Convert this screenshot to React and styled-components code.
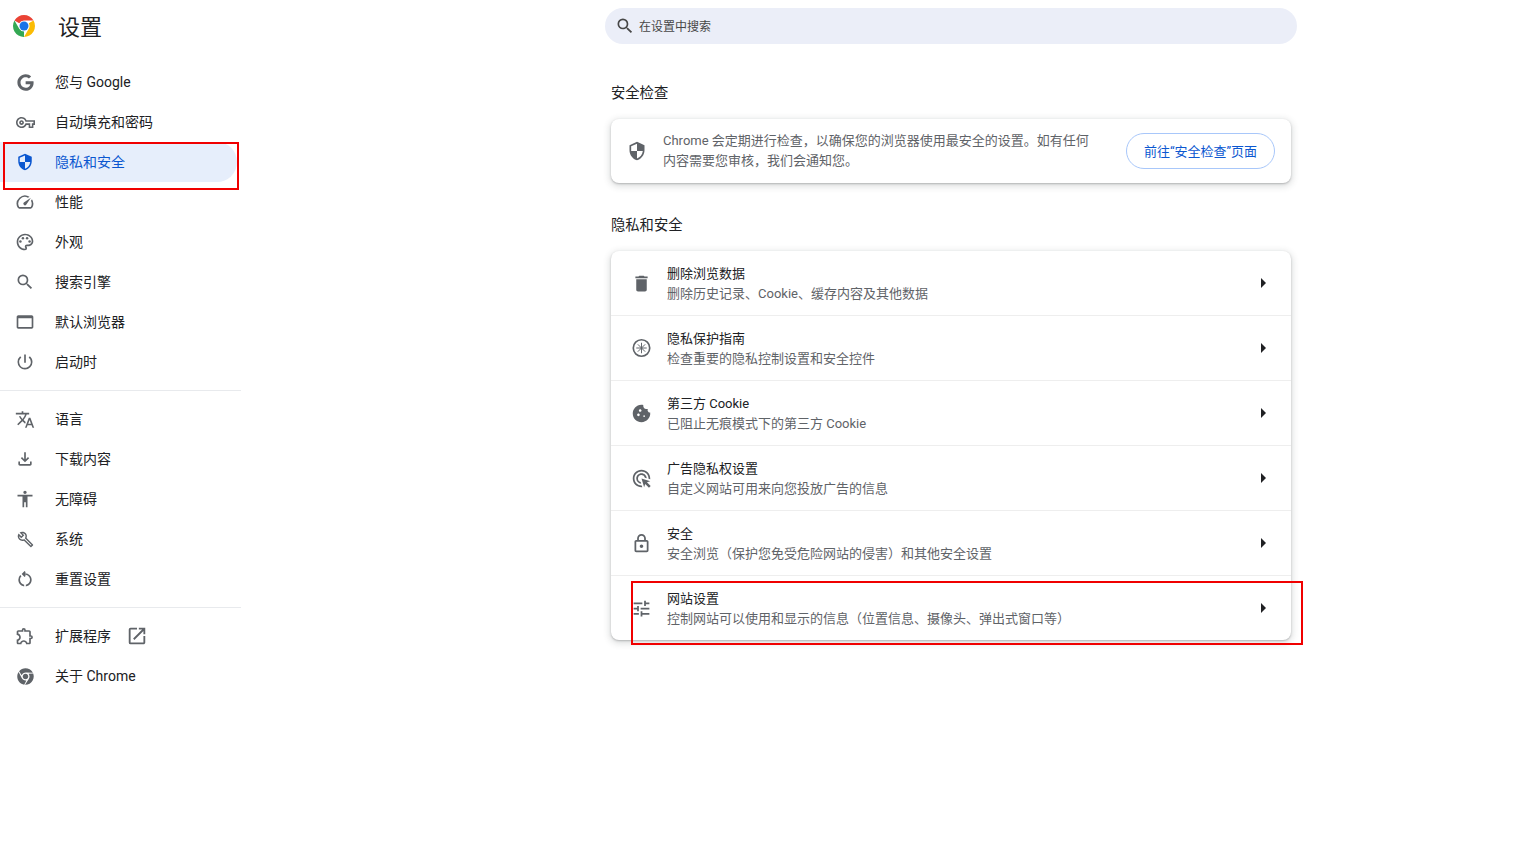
import React from 'react';
import styled, { createGlobalStyle } from 'styled-components';
import { FaChrome, FaGoogle } from 'react-icons/fa';
import {
    MdAccessibility,
    MdArrowRight,
    MdCookie,
    MdDelete,
    MdOutlineAdsClick,
    MdOutlineBuild,
    MdOutlineExtension,
    MdOutlineFileDownload,
    MdOutlineLock,
    MdOutlineOpenInNew,
    MdOutlinePalette,
    MdOutlinePowerSettingsNew,
    MdOutlineRestartAlt,
    MdOutlineSpeed,
    MdOutlineVpnKey,
    MdSearch,
    MdSecurity,
    MdTranslate,
    MdTune,
} from 'react-icons/md';

const GlobalStyle = createGlobalStyle`
    html, body {
        margin: 0;
        background: #fff;
        overflow: hidden;
    }
    body {
        font-family: Roboto, "Noto Sans CJK SC", sans-serif;
        color: #202124;
    }
`

const Page = styled.div`
    position: relative;
    display: grid;
    grid-template-columns: 241px 1fr;
    width: 1531px;
    height: 843px;
`

const Sidebar = styled.aside`
    display: flex;
    flex-direction: column;
`

const Brand = styled.header`
    display: flex;
    align-items: center;
    gap: 22px;
    height: 52px;
    padding: 0 0 10px 12px;
    box-sizing: content-box;
`

const BrandTitle = styled.h1`
    margin: 4px 0 0;
    font-size: 22px;
    font-weight: 400;
    line-height: 28px;
    color: #202124;
`

const NavItem = styled.div`
    display: flex;
    align-items: center;
    gap: 20px;
    width: ${({ $active }) => ($active ? '237px' : 'auto')};
    height: 40px;
    padding-left: 15px;
    box-sizing: border-box;
    font-size: 14px;
    color: ${({ $active }) => ($active ? '#0b57d0' : '#202124')};
    background: ${({ $active }) => ($active ? '#e6eefb' : 'transparent')};
    border-radius: 0 20px 20px 0;
`

const NavIcon = styled.span`
    display: flex;
    align-items: center;
    justify-content: center;
    flex: none;
    width: 20px;
    height: 20px;
    color: ${({ $active }) => ($active ? '#0b57d0' : '#5f6368')};
`

const NavLabel = styled.span`
    margin-top: -2px;
`

const ExternalIcon = styled.span`
    display: flex;
    margin-left: -5px;
    color: #5f6368;
`

const Divider = styled.hr`
    width: 100%;
    height: 1px;
    margin: 8px 0;
    border: 0;
    background: #e8eaed;
`

const Main = styled.main`
    padding: 8px 0 0 364px;
`

const Column = styled.div`
    width: 692px;
`

const SearchBar = styled.div`
    display: flex;
    align-items: center;
    gap: 4px;
    height: 36px;
    padding-left: 10px;
    border-radius: 18px;
    background: #ebeef8;
    font-size: 12px;
    color: #474747;
`

const SearchIcon = styled.span`
    display: flex;
    color: #474747;
`

const SearchLabel = styled.span`
    margin-top: -2px;
`

const Section = styled.section`
    margin: ${({ $first }) => ($first ? '39px' : '32px')} 6px 0;
`

const SectionTitle = styled.h2`
    margin: 0 0 16px;
    font-size: 14.3px;
    font-weight: 400;
    line-height: 20px;
    color: #202124;
`

const Card = styled.div`
    background: #fff;
    border-radius: 8px;
    box-shadow: 0 1px 2px rgba(60, 64, 67, 0.3), 0 2px 6px 2px rgba(60, 64, 67, 0.15);
`

const SafetyRow = styled.div`
    display: flex;
    align-items: center;
    height: 64px;
    padding: 0 16px;
`

const SafetyIcon = styled.span`
    display: flex;
    flex: none;
    margin-right: 16px;
    color: #5f6368;
`

const SafetyText = styled.div`
    width: 436px;
    font-size: 13px;
    line-height: 20px;
    color: #5f6368;
`

const SafetyButton = styled.button`
    flex: none;
    width: 149px;
    height: 36px;
    margin-left: auto;
    padding: 0 0 2px;
    border: 1px solid #a8c7fa;
    border-radius: 18px;
    background: #fff;
    font: inherit;
    font-size: 13px;
    color: #0b57d0;
`

const Row = styled.div`
    display: flex;
    align-items: center;
    height: ${({ $first }) => ($first ? '64px' : '65px')};
    padding: 0 16px 0 20px;
    box-sizing: border-box;
    border-top: ${({ $first }) => ($first ? '0' : '1px solid #eeeeee')};
`

const RowIcon = styled.span`
    display: flex;
    align-items: center;
    justify-content: center;
    flex: none;
    width: 21px;
    height: 21px;
    margin-right: 15px;
    color: #5f6368;
`

const RowText = styled.div`
    flex: 1;
    padding-top: 2px;
    font-size: 13px;
    line-height: 20px;
`

const RowTitle = styled.div`
    color: #202124;
`

const RowSub = styled.div`
    color: #5f6368;
`

const RowArrow = styled.span`
    display: flex;
    color: #202124;
`

const Highlight = styled.div`
    position: absolute;
    left: ${({ $x }) => $x}px;
    top: ${({ $y }) => $y}px;
    width: ${({ $w }) => $w}px;
    height: ${({ $h }) => $h}px;
    box-sizing: border-box;
    border: 2px solid #f00000;
    pointer-events: none;
`

function ChromeLogo() {
    const red = 'M4.95 13A22 22 0 0 1 43.05 13H24A11 11 0 0 0 14.47 18.5Z';
    return (
        <svg width="24" height="24" viewBox="0 0 48 48">
            <circle cx="24" cy="24" r="23" fill="#fff" />
            <path d={red} fill="#ea4335" />
            <path d={red} fill="#fbbc04" transform="rotate(120 24 24)" />
            <path d={red} fill="#34a853" transform="rotate(240 24 24)" />
            <circle cx="24" cy="24" r="9" fill="#1a73e8" />
        </svg>
    );
}

function WindowIcon() {
    return (
        <svg width="20" height="20" viewBox="0 0 24 24" fill="currentColor">
            <path d="M4 4h16c1.1 0 2 .9 2 2v12c0 1.1-.9 2-2 2H4c-1.1 0-2-.9-2-2V6c0-1.1.9-2 2-2zm0 3.5V18h16V7.5H4z" />
        </svg>
    );
}

function GuideIcon() {
    return (
        <svg width="24" height="24" viewBox="0 0 24 24" fill="none" stroke="currentColor">
            <circle cx="12" cy="12" r="9.4" strokeWidth="1.9" />
            <path d="M12 6v12M6 12h12M7.8 7.8l8.4 8.4M16.2 7.8l-8.4 8.4" strokeWidth="1.1" />
        </svg>
    );
}

const grupoPrincipal = [
    { icon: <FaGoogle size={17} />, label: '您与 Google' },
    { icon: <MdOutlineVpnKey size={19} />, label: '自动填充和密码' },
    { icon: <MdSecurity size={18} />, label: '隐私和安全', active: true },
    { icon: <MdOutlineSpeed size={20} />, label: '性能' },
    { icon: <MdOutlinePalette size={20} />, label: '外观' },
    { icon: <MdSearch size={20} />, label: '搜索引擎' },
    { icon: <WindowIcon />, label: '默认浏览器' },
    { icon: <MdOutlinePowerSettingsNew size={20} />, label: '启动时' },
];

const grupoAvancado = [
    { icon: <MdTranslate size={21} />, label: '语言' },
    { icon: <MdOutlineFileDownload size={20} />, label: '下载内容' },
    { icon: <MdAccessibility size={20} />, label: '无障碍' },
    { icon: <MdOutlineBuild size={17} />, label: '系统' },
    { icon: <MdOutlineRestartAlt size={20} />, label: '重置设置' },
];

const linhas = [
    { icon: <MdDelete size={21} />, title: '删除浏览数据', sub: '删除历史记录、Cookie、缓存内容及其他数据' },
    { icon: <GuideIcon />, title: '隐私保护指南', sub: '检查重要的隐私控制设置和安全控件' },
    { icon: <MdCookie size={21} />, title: '第三方 Cookie', sub: '已阻止无痕模式下的第三方 Cookie' },
    { icon: <MdOutlineAdsClick size={21} />, title: '广告隐私权设置', sub: '自定义网站可用来向您投放广告的信息' },
    { icon: <MdOutlineLock size={21} />, title: '安全', sub: '安全浏览（保护您免受危险网站的侵害）和其他安全设置' },
    { icon: <MdTune size={21} />, title: '网站设置', sub: '控制网站可以使用和显示的信息（位置信息、摄像头、弹出式窗口等）' },
];

function App() {
    return (
        <Page>
            <GlobalStyle />
            <Sidebar>
                <Brand>
                    <ChromeLogo />
                    <BrandTitle>设置</BrandTitle>
                </Brand>
                {grupoPrincipal.map((item) => (
                    <NavItem key={item.label} $active={item.active}>
                        <NavIcon $active={item.active}>{item.icon}</NavIcon>
                        <NavLabel>{item.label}</NavLabel>
                    </NavItem>
                ))}
                <Divider />
                {grupoAvancado.map((item) => (
                    <NavItem key={item.label}>
                        <NavIcon>{item.icon}</NavIcon>
                        <NavLabel>{item.label}</NavLabel>
                    </NavItem>
                ))}
                <Divider />
                <NavItem>
                    <NavIcon><MdOutlineExtension size={20} /></NavIcon>
                    <NavLabel>扩展程序</NavLabel>
                    <ExternalIcon><MdOutlineOpenInNew size={22} /></ExternalIcon>
                </NavItem>
                <NavItem>
                    <NavIcon><FaChrome size={17} /></NavIcon>
                    <NavLabel>关于 Chrome</NavLabel>
                </NavItem>
            </Sidebar>
            <Main>
                <Column>
                    <SearchBar>
                        <SearchIcon><MdSearch size={20} /></SearchIcon>
                        <SearchLabel>在设置中搜索</SearchLabel>
                    </SearchBar>
                    <Section $first>
                        <SectionTitle>安全检查</SectionTitle>
                        <Card>
                            <SafetyRow>
                                <SafetyIcon><MdSecurity size={20} /></SafetyIcon>
                                <SafetyText>Chrome 会定期进行检查，以确保您的浏览器使用最安全的设置。如有任何内容需要您审核，我们会通知您。</SafetyText>
                                <SafetyButton>前往“安全检查”页面</SafetyButton>
                            </SafetyRow>
                        </Card>
                    </Section>
                    <Section>
                        <SectionTitle>隐私和安全</SectionTitle>
                        <Card>
                            {linhas.map((linha, index) => (
                                <Row key={linha.title} $first={index === 0}>
                                    <RowIcon>{linha.icon}</RowIcon>
                                    <RowText>
                                        <RowTitle>{linha.title}</RowTitle>
                                        <RowSub>{linha.sub}</RowSub>
                                    </RowText>
                                    <RowArrow><MdArrowRight size={24} /></RowArrow>
                                </Row>
                            ))}
                        </Card>
                    </Section>
                </Column>
            </Main>
            <Highlight $x={3} $y={142} $w={236} $h={48} />
            <Highlight $x={631} $y={581} $w={672} $h={64} />
        </Page>
    );
}

export default App
